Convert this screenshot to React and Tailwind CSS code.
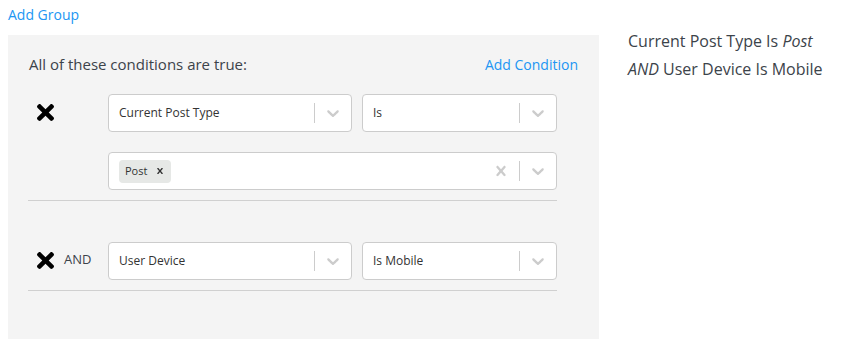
import React from 'react';

const TimesIcon = () => (
  <svg viewBox="0 80 352 352" width="17" height="17" fill="#000">
    <path d="M242.72 256l100.07-100.07c12.28-12.28 12.28-32.19 0-44.48l-22.24-22.24c-12.28-12.28-32.19-12.28-44.48 0L176 189.28 75.930 89.21c-12.28-12.28-32.19-12.28-44.48 0L9.21 111.45c-12.28 12.28-12.28 32.19 0 44.48L109.28 256 9.21 356.07c-12.28 12.280-12.28 32.19 0 44.48l22.24 22.24c12.28 12.28 32.2 12.28 44.48 0L176 322.72l100.07 100.07c12.28 12.28 32.2 12.28 44.48 0l22.24-22.24c12.28-12.28 12.28-32.19 0-44.48L242.72 256z" />
  </svg>
);

const Chevron = () => (
  <svg viewBox="0 0 20 20" width="20" height="20" fill="#cccccc">
    <path d="M4.516 7.548c0.436-0.446 1.043-0.481 1.576 0l3.908 3.747 3.908-3.747c0.533-0.481 1.141-0.446 1.574 0 0.436 0.445 0.408 1.197 0 1.615-0.406 0.418-4.695 4.502-4.695 4.502-0.217 0.223-0.502 0.335-0.787 0.335s-0.57-0.112-0.789-0.335c0 0-4.287-4.084-4.695-4.502s-0.436-1.17 0-1.615z" />
  </svg>
);

const ClearIcon = ({ size = 20, color = '#cccccc' }) => (
  <svg viewBox="0 0 20 20" width={size} height={size} fill={color}>
    <path d="M14.348 14.849c-0.469 0.469-1.229 0.469-1.697 0l-2.651-3.030-2.651 3.029c-0.469 0.469-1.229 0.469-1.697 0-0.469-0.469-0.469-1.229 0-1.697l2.758-3.15-2.759-3.152c-0.469-0.469-0.469-1.228 0-1.697s1.228-0.469 1.697 0l2.652 3.031 2.651-3.031c0.469-0.469 1.228-0.469 1.697 0s0.469 1.229 0 1.697l-2.758 3.152 2.758 3.15c0.469 0.469 0.469 1.229 0 1.698z" />
  </svg>
);

const Indicators = ({ clearable }) => (
  <div className="flex items-center self-stretch">
    {clearable && (
      <div className="px-2 flex items-center">
        <ClearIcon />
      </div>
    )}
    <span className="w-px self-stretch my-2 bg-[#cccccc]" />
    <div className="px-2 flex items-center">
      <Chevron />
    </div>
  </div>
);

function Select({ value, className }) {
  return (
    <div className={`flex items-center h-[38px] bg-white border border-[#cccccc] rounded ${className}`}>
      <div className="flex-1 px-[10px] text-[12px] text-[#333333] truncate">{value}</div>
      <Indicators />
    </div>
  );
}

function MultiSelect({ values }) {
  return (
    <div className="flex items-center h-[38px] bg-white border border-[#cccccc] rounded">
      <div className="flex-1 flex items-center gap-1 px-[10px]">
        {values.map((v) => (
          <div key={v} className="flex items-center h-[23px] w-[52px] bg-[#e6e8e6] rounded-sm pl-[6px] text-[11px] text-[#333333]">
            <span>{v}</span>
            <span className="ml-auto mr-[5px] flex items-center">
              <ClearIcon size={12} color="#333333" />
            </span>
          </div>
        ))}
      </div>
      <Indicators clearable />
    </div>
  );
}

export default function App() {
  return (
    <div className="flex bg-white font-['Open_Sans',sans-serif] text-[#3c434a]">
      <div className="w-[599px] pl-2 shrink-0">
        <div className="h-[35px] pt-[5px] text-[14px] leading-[20px] text-[#2196f3]">Add Group</div>
        <div className="bg-[#f4f4f4] h-[304px] pl-5 pr-[21px] pt-[18px]">
          <div className="flex justify-between items-center h-[22px]">
            <span className="pl-px text-[15px]">All of these conditions are true:</span>
            <span className="text-[14px] text-[#2196f3]">Add Condition</span>
          </div>

          <div className="pr-[21px]">
            <div className="flex mt-[19px]">
              <div className="w-[80px] pl-[9px] pt-[10px]">
                <TimesIcon />
              </div>
              <Select value="Current Post Type" className="w-[244px]" />
              <Select value="Is" className="w-[195px] ml-[10px]" />
            </div>
            <div className="ml-[80px] mt-[20px]">
              <MultiSelect values={['Post']} />
            </div>
            <div className="mt-[10px] border-t border-[#d0d0d0]" />

            <div className="flex mt-[41px]">
              <div className="w-[80px] pl-[9px] flex items-center gap-[10px] pb-[2px]">
                <TimesIcon />
                <span className="text-[13px]">AND</span>
              </div>
              <Select value="User Device" className="w-[244px]" />
              <Select value="Is Mobile" className="w-[195px] ml-[10px]" />
            </div>
            <div className="mt-[10px] border-t border-[#d0d0d0]" />
          </div>
        </div>
      </div>
      <div className="ml-[29px] mt-[27px] w-[215px] text-[16px] leading-[28px]">
        Current Post Type Is <em>Post</em> <em>AND</em> User Device Is Mobile
      </div>
    </div>
  );
}
